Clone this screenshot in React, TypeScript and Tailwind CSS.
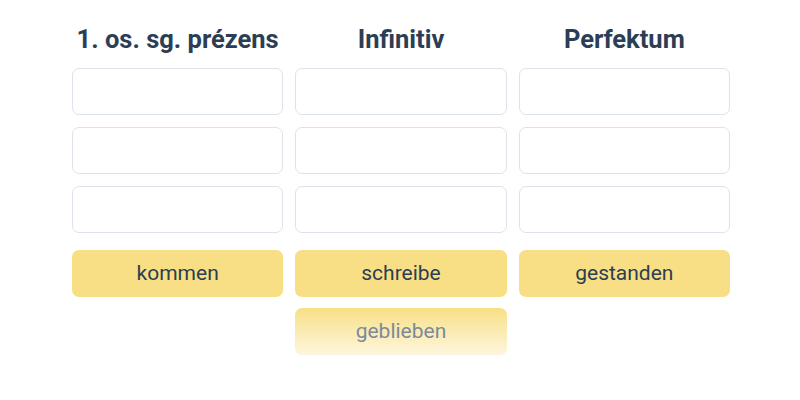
import React from "react";

const columns = [
  { title: "1. os. sg. prézens", word: "kommen" },
  { title: "Infinitiv", word: "schreibe" },
  { title: "Perfektum", word: "gestanden" },
];

const App: React.FC = () => {
  return (
    <div
      className="w-[800px] h-[400px] bg-white"
      style={{ fontFamily: "Roboto, 'Noto Sans', sans-serif" }}
    >
      <div className="ml-[72px] w-[658px] pt-[21px] grid grid-cols-3 gap-x-[12px]">
        {columns.map((c) => (
          <div key={c.title} className="flex flex-col">
            <h2 className="text-center text-[25.5px] leading-[36px] font-bold text-[#2c3e55] mb-[11px] whitespace-nowrap">
              {c.title}
            </h2>
            <div className="flex flex-col gap-[12px]">
              {[0, 1, 2].map((i) => (
                <div
                  key={i}
                  className="h-[47px] rounded-[7px] border border-[#dde3ea] bg-white"
                />
              ))}
            </div>
            <div className="mt-[17px] h-[47px] rounded-[7px] bg-[#f8df85] flex items-center justify-center text-[21px] text-[#2c3e50]">
              {c.word}
            </div>
            {c.word === "schreibe" && (
              <div className="mt-[11px] h-[47px] rounded-[7px] bg-gradient-to-b from-[#f8df85] to-[#fdf6dc] flex items-center justify-center text-[21px] text-[#7d8a97]">
                geblieben
              </div>
            )}
          </div>
        ))}
      </div>
    </div>
  );
};

export default App;
